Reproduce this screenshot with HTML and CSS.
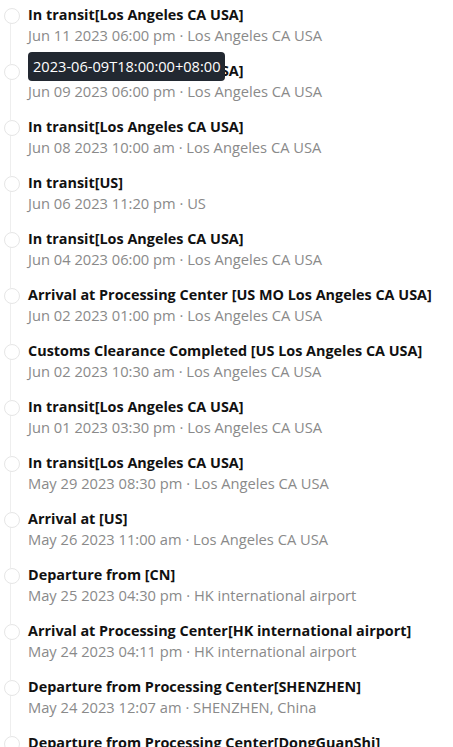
FILE: index.html
```html
<!DOCTYPE html>
<html lang="en">
<head>
  <meta charset="UTF-8">
  <title>Tracking</title>
  <link rel="stylesheet" href="styles.css">
</head>
<body>
<ul class="timeline">
  <li class="event">
    <div class="title">In transit[Los Angeles CA USA]</div>
    <div class="meta">Jun 11 2023 06:00 pm · Los Angeles CA USA</div>
  </li>
  <li class="event">
    <div class="title">In transit[Los Angeles CA USA]</div>
    <div class="meta">Jun 09 2023 06:00 pm · Los Angeles CA USA</div>
    <span class="tooltip">2023-06-09T18:00:00+08:00</span>
  </li>
  <li class="event">
    <div class="title">In transit[Los Angeles CA USA]</div>
    <div class="meta">Jun 08 2023 10:00 am · Los Angeles CA USA</div>
  </li>
  <li class="event">
    <div class="title">In transit[US]</div>
    <div class="meta">Jun 06 2023 11:20 pm · US</div>
  </li>
  <li class="event">
    <div class="title">In transit[Los Angeles CA USA]</div>
    <div class="meta">Jun 04 2023 06:00 pm · Los Angeles CA USA</div>
  </li>
  <li class="event">
    <div class="title">Arrival at Processing Center [US MO Los Angeles CA USA]</div>
    <div class="meta">Jun 02 2023 01:00 pm · Los Angeles CA USA</div>
  </li>
  <li class="event">
    <div class="title">Customs Clearance Completed [US Los Angeles CA USA]</div>
    <div class="meta">Jun 02 2023 10:30 am · Los Angeles CA USA</div>
  </li>
  <li class="event">
    <div class="title">In transit[Los Angeles CA USA]</div>
    <div class="meta">Jun 01 2023 03:30 pm · Los Angeles CA USA</div>
  </li>
  <li class="event">
    <div class="title">In transit[Los Angeles CA USA]</div>
    <div class="meta">May 29 2023 08:30 pm · Los Angeles CA USA</div>
  </li>
  <li class="event">
    <div class="title">Arrival at [US]</div>
    <div class="meta">May 26 2023 11:00 am · Los Angeles CA USA</div>
  </li>
  <li class="event">
    <div class="title">Departure from [CN]</div>
    <div class="meta">May 25 2023 04:30 pm · HK international airport</div>
  </li>
  <li class="event">
    <div class="title">Arrival at Processing Center[HK international airport]</div>
    <div class="meta">May 24 2023 04:11 pm · HK international airport</div>
  </li>
  <li class="event">
    <div class="title">Departure from Processing Center[SHENZHEN]</div>
    <div class="meta">May 24 2023 12:07 am · SHENZHEN, China</div>
  </li>
  <li class="event">
    <div class="title">Departure from Processing Center[DongGuanShi]</div>
    <div class="meta">May 23 2023 09:00 pm · DongGuanShi, China</div>
  </li>
</ul>
</body>
</html>
```

FILE: styles.css
```css
* {
  box-sizing: border-box;
}

body {
  margin: 0;
  background: #fff;
  font-family: "Open Sans", "Noto Sans", sans-serif;
  color: #111;
}

.timeline {
  list-style: none;
  margin: 0;
  padding: 5px 0 0 0;
}

.event {
  position: relative;
  padding-left: 28px;
  height: 56px;
}

/* кружок */
.event::before {
  content: "";
  position: absolute;
  left: 4px;
  top: 3px;
  width: 14px;
  height: 14px;
  border: 1px solid #e6e6e6;
  border-radius: 50%;
  background: #fff;
  z-index: 1;
}

/* линия */
.event::after {
  content: "";
  position: absolute;
  left: 10px;
  top: 17px;
  bottom: -3px;
  width: 1px;
  background: #eeeeee;
}

.title {
  font-size: 14.4px;
  font-weight: 700;
  line-height: 20px;
  white-space: nowrap;
}

.meta {
  font-size: 14.7px;
  line-height: 20px;
  color: #8a8a8a;
  white-space: nowrap;
}

.tooltip {
  position: absolute;
  left: 28px;
  top: -9px;
  z-index: 2;
  background: #222831;
  color: #fff;
  font-size: 14.6px;
  line-height: 29px;
  padding: 0 5px;
  border-radius: 4px;
  white-space: nowrap;
}
```
